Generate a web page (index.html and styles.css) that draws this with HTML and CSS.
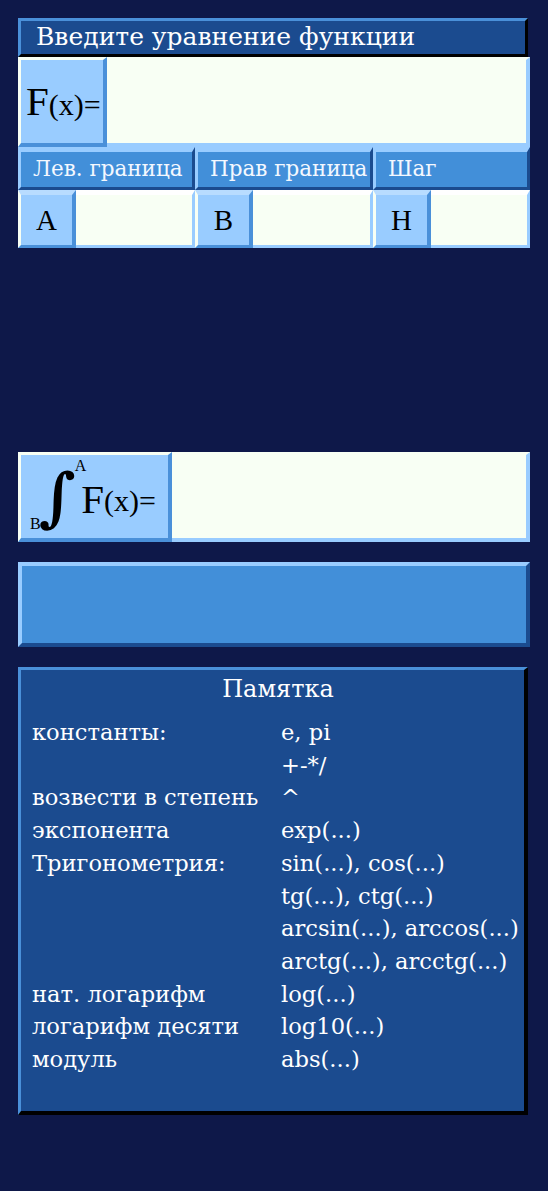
FILE: index.html
```html
<!DOCTYPE html>
<html lang="ru">
<head>
<meta charset="utf-8">
<title>Интеграл</title>
<link rel="stylesheet" href="styles.css">
</head>
<body>
<div class="page">
  <div class="title-bar">Введите уравнение функции</div>
  <div class="expr-row">
    <div class="expr-label"><span class="big-f">F</span><span class="fx">(x)=</span></div>
    <div class="expr-input"></div>
  </div>
  <div class="bounds">
    <div class="bound-col">
      <div class="bound-head">Лев. граница</div>
      <div class="bound-row"><div class="bound-letter">A</div><div class="bound-input"></div></div>
    </div>
    <div class="bound-col">
      <div class="bound-head">Прав граница</div>
      <div class="bound-row"><div class="bound-letter">B</div><div class="bound-input"></div></div>
    </div>
    <div class="bound-col">
      <div class="bound-head">Шаг</div>
      <div class="bound-row"><div class="bound-letter">H</div><div class="bound-input"></div></div>
    </div>
  </div>

  <div class="expr-row integral-row">
    <div class="expr-label int-label">
      <span class="lim-b">B</span><span class="int-sign">∫</span><span class="lim-a">A</span><span class="int-f"><span class="big-f">F</span><span class="fx">(x)=</span></span>
    </div>
    <div class="expr-input"></div>
  </div>

  <div class="calc-button"></div>

  <div class="memo">
    <div class="memo-title">Памятка</div>
    <div class="memo-grid">
      <div>константы:</div><div>e, pi</div>
      <div></div><div>+-*/</div>
      <div>возвести в степень</div><div>^</div>
      <div>экспонента</div><div>exp(...)</div>
      <div>Тригонометрия:</div><div>sin(...), cos(...)</div>
      <div></div><div>tg(...), ctg(...)</div>
      <div></div><div>arcsin(...), arccos(...)</div>
      <div></div><div>arctg(...), arcctg(...)</div>
      <div>нат. логарифм</div><div>log(...)</div>
      <div>логарифм десяти</div><div>log10(...)</div>
      <div>модуль</div><div>abs(...)</div>
    </div>
  </div>
</div>
</body>
</html>
```
FILE: styles.css
```css
* { box-sizing: border-box; }
html, body { margin: 0; padding: 0; }
body {
  background: #0e1849;
  font-family: "DejaVu Serif", "Liberation Serif", serif;
  height: 1191px;
}
.page {
  padding: 18px 20px 0 18px;
  width: 548px;
}
.title-bar {
  height: 39px;
  width: 510px;
  background: #1b4b8f;
  border-style: solid;
  border-width: 3px 3px 3px 3px;
  border-color: #4a90d9 #000 #000 #4a90d9;
  color: #fff;
  font-size: 25px;
  line-height: 32px;
  padding-left: 15px;
  white-space: nowrap;
}
.expr-row {
  display: flex;
  height: 90px;
  width: 512px;
}
.expr-label {
  width: 89px;
  background: #99ccff;
  border-style: solid;
  border-width: 3px 4px 4px 3px;
  border-color: #f8fff4 #4a90d9 #4a90d9 #f8fff4;
  display: flex;
  align-items: center;
  padding-left: 5px;
  color: #000;
  font-family: "Liberation Serif", serif;
  white-space: nowrap;
}
.big-f { font-size: 41px; line-height: 1; }
.fx { font-size: 30px; line-height: 1; margin-top: 6px; }
.expr-input {
  flex: 1;
  background: #f8fff4;
  border-style: solid;
  border-width: 3px 4px 4px 0;
  border-color: #f8fff4 #99ccff #99ccff #f8fff4;
}
.bounds {
  display: grid;
  grid-template-columns: 177px 178px 157px;
  width: 512px;
}
.bound-head {
  height: 43px;
  background: #428fd9;
  border-style: solid;
  border-width: 5px 3px 3px 3px;
  border-color: #99ccff #1b4b8f #1b4b8f #99ccff;
  color: #f4f8ff;
  font-size: 21.5px;
  line-height: 34px;
  padding-left: 12px;
  white-space: nowrap;
  overflow: hidden;
}
.bound-row {
  display: flex;
  height: 58px;
}
.bound-letter {
  width: 58px;
  background: #99ccff;
  border-style: solid;
  border-width: 5px 4px 3px 3px;
  border-color: #b8dcff #4a90d9 #4a90d9 #f8fff4;
  font-family: "Liberation Serif", serif;
  font-size: 29px;
  color: #000;
  display: flex;
  align-items: center;
  justify-content: center;
}
.bound-input {
  flex: 1;
  background: #f8fff4;
  border-style: solid;
  border-width: 5px 3px 3px 0;
  border-color: #ffffff #99ccff #99ccff #f8fff4;
}
.integral-row {
  margin-top: 204px;
}
.int-label {
  width: 154px;
  padding-left: 9px;
  align-items: stretch;
}
.lim-b {
  font-size: 16px;
  line-height: 16px;
  align-self: flex-end;
  margin-bottom: 6px;
}
.int-sign {
  font-family: "DejaVu Serif", serif;
  font-weight: bold;
  font-size: 64px;
  line-height: 64px;
  align-self: center;
  margin-left: -2px;
  margin-right: -1px;
}
.lim-a {
  font-size: 16px;
  line-height: 16px;
  align-self: flex-start;
  margin-top: 3px;
}
.int-f {
  align-self: center;
  display: flex;
  align-items: center;
  margin-left: -5px;
  margin-top: 4px;
  line-height: 1;
}
.int-f .big-f { line-height: 28px; }
.int-f .fx { line-height: 28px; margin-top: 4px; }
.calc-button {
  margin-top: 20px;
  height: 85px;
  width: 512px;
  background: #428fd9;
  border-style: solid;
  border-width: 4px;
  border-color: #99ccff #1b4b8f #1b4b8f #99ccff;
}
.memo {
  margin-top: 20px;
  width: 510px;
  height: 448px;
  background: #1b4b8f;
  border-style: solid;
  border-width: 3px 4px 4px 3px;
  border-color: #4a90d9 #000 #000 #4a90d9;
  color: #fff;
  padding-left: 11px;
}
.memo-title {
  text-align: center;
  font-size: 24px;
  line-height: 38px;
  margin-bottom: 8px;
}
.memo-grid {
  display: grid;
  grid-template-columns: 249px 1fr;
  font-size: 22.6px;
  line-height: 32.7px;
  white-space: nowrap;
}
```
